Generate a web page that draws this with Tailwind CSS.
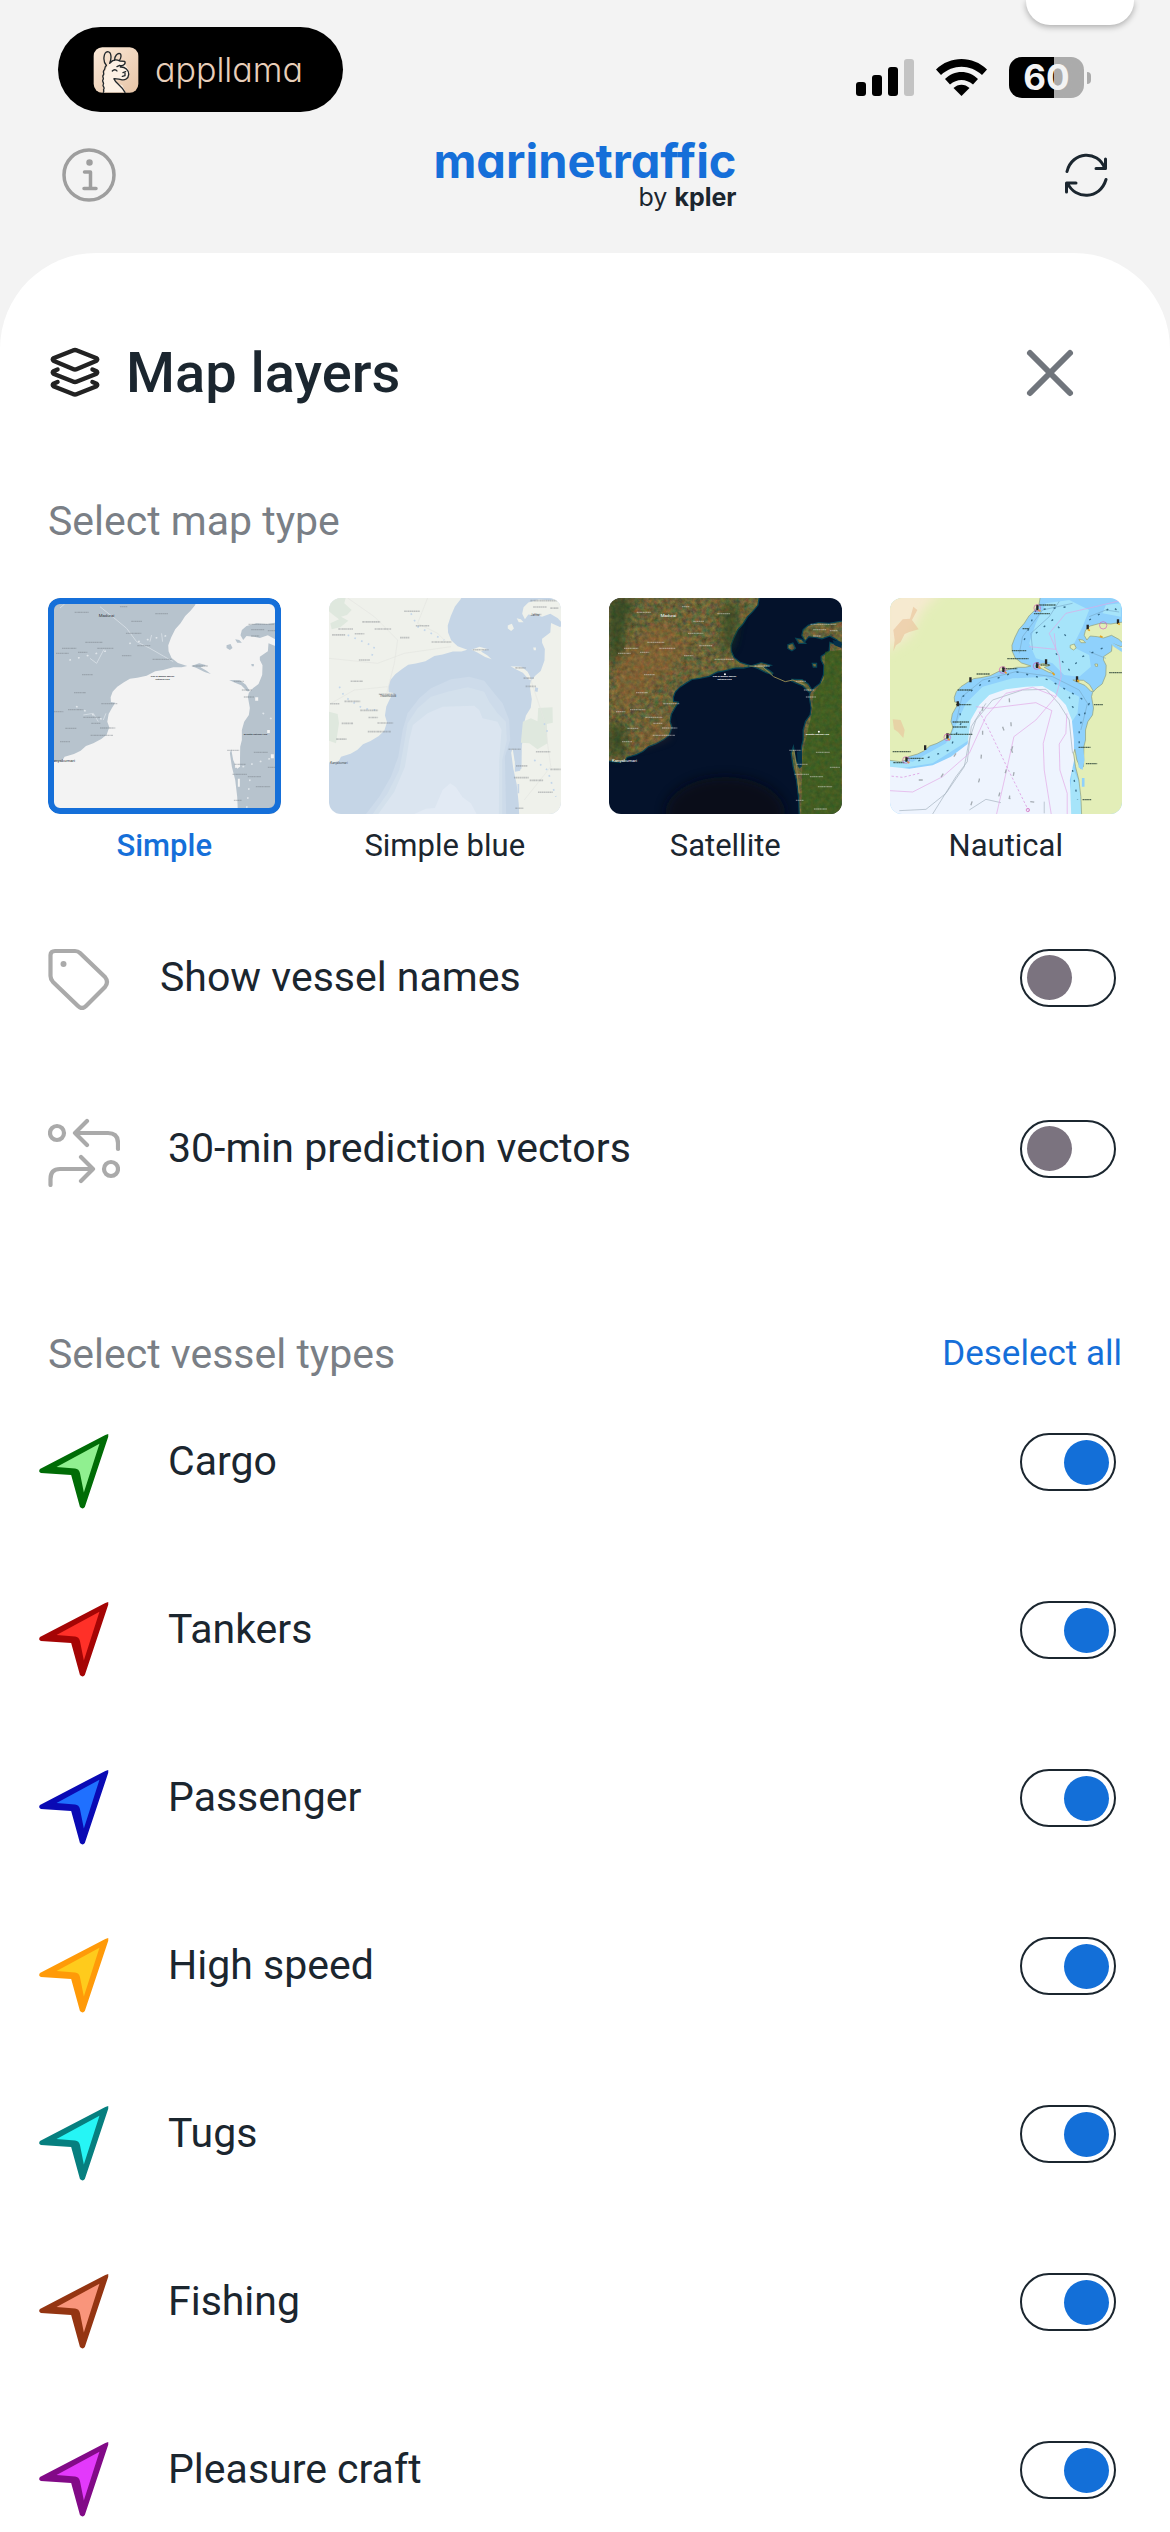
<!DOCTYPE html>
<html lang="en">
  <head>
    <meta charset="utf-8" />
    <meta name="viewport" content="width=device-width, initial-scale=1" />
    <title>Map layers</title>
    <script src="https://cdn.jsdelivr.net/npm/@tailwindcss/browser@4"></script>
  </head>
  <body class="relative flex h-screen flex-col overflow-hidden bg-[#f3f3f3] font-[Roboto,'Noto_Sans',sans-serif] text-[#1b262f]">

    <!-- shared shapes -->
    <svg class="absolute size-0" aria-hidden="true">
      <defs>
        <symbol id="vessel" viewBox="-3 -4 86 82">
          <path fill="currentColor" d="M71 0 68 1 1 36Q-1 39 2 40L33 42 42 75Q45 78 47 75L71 3Z" />
          <path d="M62 10 18 34 37 35.500Q41 36 42 40L46 60Z" />
        </symbol>
        <g id="coast">
          <path d="M40 40H502L496 75 482 92 466 108 452 130 436 148 424 172 415 196 416 214 425 234 444 249 472 258 455 262 430 262 400 270 376 274 350 287 322 293 300 296 282 307 262 320 248 335 242 352 243 366 256 368 246 384 236 402 232 425 238 442 230 464 214 477 190 490 168 498 152 512 132 522 104 530 98 540 80 545 40 540Z" />
          <path d="M770 186 742 200 716 190 714 214 690 230 690 240 698 256 697 285 686 312 670 324 657 338 654 350 660 384 657 405 643 425 636 450 636 480 631 500 630 560 622 566 610 540 604 508 600 520 606 560 616 600 622 650 625 720H770Z" />
          <path d="M636 150 650 138 680 130 712 132 760 124V200L736 178 714 166 690 174 672 170 650 168 640 180 632 166ZM590 196 602 192 608 204 600 210 590 204ZM616 178 628 180 636 188 622 188ZM664 252 672 252 672 259 666 259Z" />
          <path d="M484 258 508 250 530 256 512 262 530 272 543 282 524 276 500 264ZM598 300 630 301 648 314 660 334 652 334 634 316 612 307Z" />
        </g>
        <path id="place-names" fill="none" stroke-width="4" stroke-dasharray="5 1 3 1 6 1" d="M134 97h42M270 80h22M376 101h38M304 124h32M288 160h46M166 187h52M96 205h44M202 205h48M78 220h38M144 217h28M276 227h28M322 197h40M368 238h58M488 258h46M156 284h32M132 338h36M214 371h48M114 389h46M72 395h28M160 412h52M184 430h28M106 445h34M210 444h46M182 466h68M90 485h30M656 133h78M664 149h40M714 152h24M664 168h24M612 304h30M636 330h30M642 351h30M592 511h36M672 517h42M614 553h34M608 583h44M654 590h40M678 620h44M612 661h24M714 562h30M666 687h40" />
        <g id="place-labels" font-family="Roboto, sans-serif">
          <text x="206" y="110" font-size="13">Madurai</text>
          <text x="398" y="292" font-size="7" font-weight="700" text-anchor="middle">Gulf of Mannar Marine</text>
          <text x="398" y="301" font-size="7" font-weight="700" text-anchor="middle">National Park</text>
          <text x="642" y="465" font-size="7" font-weight="700">Wilpattu National Park</text>
          <text x="60" y="547" font-size="13">Kanyakumari</text>
        </g>
        <filter id="terrain" x="0" y="0" width="100%" height="100%" color-interpolation-filters="sRGB">
          <feTurbulence type="fractalNoise" baseFrequency="0.07" numOctaves="5" seed="8" />
          <feColorMatrix values=".6 0 0 0 .13  .15 .35 0 0 .15  0 .1 .2 0 .08  0 0 0 0 .75" result="noise" />
          <feComposite in="noise" in2="SourceGraphic" operator="in" result="n" />
          <feMerge><feMergeNode in="SourceGraphic" /><feMergeNode in="n" /></feMerge>
        </filter>
        <filter id="soft" x="-50%" y="-50%" width="200%" height="200%"><feGaussianBlur stdDeviation="16" /></filter>
        <linearGradient id="llama-bg" x1="0" y1="0" x2="1" y2="1">
          <stop stop-color="#fbe9d8" /><stop offset="1" stop-color="#e6c4a6" />
        </linearGradient>
      </defs>
    </svg>

    <div class="absolute top-0 right-9 h-[25px] w-27 rounded-b-3xl bg-white shadow-[0_2px_6px_rgba(0,0,0,0.3)]"></div>

    <header>
      <!-- status bar -->
      <div class="flex items-center justify-between pt-[27px] pr-[79px] pl-[58px]">
        <div class="flex h-[85px] items-center gap-4 rounded-full bg-black pr-10 pl-[35px]">
          <svg class="size-[46px]" viewBox="278 137 138 138" aria-hidden="true">
            <rect x="280" y="138" width="134" height="136" rx="26" fill="url(#llama-bg)" />
            <path fill="#fdf1e4" d="M310 273 308 240 312 215 322 195 332 182 354 176 372 184 384 206 384 226 370 236 344 234 350 246 366 252 376 273Z" />
            <path fill="none" stroke="#22282b" stroke-width="4" stroke-linecap="round" stroke-linejoin="round" d="M318 192C306 180 310 152 322 151 334 152 334 172 328 186M343 177C342 164 352 154 359 157 364 160 362 170 358 176M329 185C338 174 350 174 358 179L373 180C377 186 370 195 358 192L350 196M336 209C340 204 347 204 350 209M360 197C374 196 386 206 385 220 384 232 374 238 362 235 352 233 346 231 341 232M368 214 376 211M374 216V223L366 225M341 233C346 246 362 250 374 273M318 193C311 197 316 203 311 207 306 212 313 217 309 221 304 227 312 230 308 235 304 240 312 244 309 249 305 254 313 257 311 262 307 266 313 269 309 273" />
          </svg>
          <span class="font-[Inter,sans-serif] text-[34px]/[40px] font-light text-[#e8cfba] [font-feature-settings:'cv11']">appllama</span>
        </div>
        <div class="flex items-center gap-[22px] pt-4">
          <svg class="h-[37px] w-[58px]" viewBox="0 0 58 37" aria-label="Signal">
            <rect y="23" width="10" height="14" rx="3" /><rect x="16" y="16" width="10" height="21" rx="3" /><rect x="32" y="8" width="10" height="29" rx="3" /><rect x="48" width="10" height="37" rx="3" fill="#c3c3c3" />
          </svg>
          <svg class="h-[37px] w-[51px]" viewBox="0 0 51 37" aria-label="Wi-Fi">
            <path d="M0 10.500C14-3.500 37-3.500 51 10.500L46 16C34 5 17 5 5 16ZM9 20C18 10.500 33 10.500 42 20L37 25.500C30 19.500 21 19.500 14 25.500ZM17.500 29C22 24.500 29 24.500 33.500 29L25.500 37Z" />
          </svg>
          <div class="flex items-center gap-[3px]">
            <div class="flex h-[41px] w-[75px] items-center justify-center rounded-[13px] bg-linear-to-r from-black from-60% to-[#ababab] to-60% font-[Inter,sans-serif] text-[35px] font-bold text-[#f3f3f3]">60</div>
            <div class="h-3 w-1 rounded-r-full bg-[#ababab]"></div>
          </div>
        </div>
      </div>

      <!-- app bar -->
      <div class="grid h-[126px] grid-cols-3 items-center px-[62px]">
        <button type="button" aria-label="Information" class="justify-self-start">
          <svg class="size-[54px]" viewBox="0 0 54 54" fill="none" stroke="#9e9e9e" stroke-width="3.500" stroke-linecap="round" stroke-linejoin="round">
            <circle cx="27" cy="27" r="25" /><path d="M22.500 24H28.500V40M22 40.500H34" /><circle cx="27.500" cy="14.500" r="1.500" fill="#9e9e9e" />
          </svg>
        </button>
        <div class="flex flex-col items-end justify-self-center font-[Inter,sans-serif] [font-feature-settings:'cv11']">
          <span class="text-[47px]/[44px] font-bold text-[#156fd9]">marinetraffic</span>
          <span class="text-[25px]/[28px]">by <b>kpler</b></span>
        </div>
        <button type="button" aria-label="Refresh" class="justify-self-end">
          <svg class="size-[44px]" viewBox="0 0 44 44" fill="none" stroke="#1b262f" stroke-width="3" stroke-linecap="round" stroke-linejoin="round">
            <path d="M3 18.500C8-2 34-3 40.500 15M41.500 6V15.500H32M42 26.500C36 47 11 47 3.500 30M2.500 39V30H12" />
          </svg>
        </button>
      </div>
    </header>

    <main class="mt-[15px] flex-1 rounded-t-[96px] bg-white px-12 pt-19">
      <div class="flex h-22 items-center gap-6">
        <svg class="size-[54px]" viewBox="-2 -1 54 54" fill="none" stroke="#222" stroke-width="4.500" stroke-linecap="round" stroke-linejoin="round" aria-hidden="true">
          <path d="M23 3.500Q25 2.500 27 3.500L46 11Q48.500 12.500 46 14L27 22Q25 23 23 22L4 14Q1.500 12.500 4 11ZM7.500 22.500 4 24Q1.500 25.500 4 27L23 34.500Q25 35.500 27 34.500L46 27Q48.500 25.500 46 24L42.500 22.500M7.500 35 4 36.500Q1.500 38 4 39.500L23 47Q25 48 27 47L46 39.500Q48.500 38 46 36.500L42.500 35" />
        </svg>
        <h1 class="flex-1 text-[56px] font-medium">Map layers</h1>
        <button type="button" aria-label="Close" class="mr-[46px]">
          <svg class="size-[52px]" viewBox="0 0 52 52" fill="none" stroke="#70757c" stroke-width="6" stroke-linecap="round"><path d="M6 6 46 46M46 6 6 46" /></svg>
        </button>
      </div>

      <h2 class="mt-20 text-[41px]/[48px] text-[#7a7f86]">Select map type</h2>
      <div class="mt-[53px] grid grid-cols-4 gap-12 text-center text-[31px]/[40px]">
        <button type="button" aria-pressed="true" class="flex flex-col gap-3">
          <span class="relative block h-[216px] w-full overflow-hidden rounded-xl after:absolute after:inset-0 after:rounded-xl after:border-6 after:border-[#156fd9]">
            <svg class="size-full" viewBox="54 54 698 648" preserveAspectRatio="none" aria-hidden="true">
              <path fill="#f3f3f3" d="M0 0H800V760H0Z" />
              <use href="#coast" fill="#b7c3cd" />
              <path fill="none" stroke="#d3dbe2" stroke-width="3" d="M210 80 250 112 290 145 320 185 360 205 400 228 430 245M180 235 200 250 222 208M160 405 190 400 205 425M395 160 398 185M365 165 360 185M90 84 104 72M228 400 220 420" />
              <path fill="none" stroke="#dfe5ea" stroke-width="5" stroke-linecap="round" stroke-dasharray="1 26" d="M120 240 240 210M140 380 230 425M300 190 420 165M640 560 740 530M660 600 650 690M700 400 730 420" />
              <path fill="#f3f3f3" d="M676 352h9v10h-9ZM612 515 630 510 630 560 616 564ZM723 523h9v12h-9ZM624 596h6v24h-6ZM712 450h8v9h-8Z" />
              <use href="#place-names" stroke="#70777f" opacity=".4" />
              <use href="#place-labels" fill="#30363d" />
            </svg>
          </span>
          <span class="w-full font-medium text-[#156fd9]">Simple</span>
        </button>
        <button type="button" aria-pressed="false" class="flex flex-col gap-3">
          <span class="block h-[216px] w-full overflow-hidden rounded-xl">
            <svg class="size-full" viewBox="54 54 698 648" preserveAspectRatio="none" aria-hidden="true">
              <path fill="#c5d5e6" d="M0 0H800V760H0Z" />
              <path fill="#cddbea" d="M165 702 205 650 240 590 262 530 275 450 290 400 325 355 360 325 420 298 475 290 520 302 550 340 575 370 595 420 598 480 582 530 586 702Z" />
              <path fill="#d3e0ec" d="M185 702 230 640 265 570 278 500 290 430 320 385 360 350 410 335 470 322 520 335 535 365 560 400 585 425 588 480 574 540 574 702Z" />
              <path fill="#dbe5f0" d="M202 702 250 635 282 560 295 480 306 435 350 400 395 380 490 377 505 390 515 415 560 425 572 450 565 540 564 702Z" />
              <path fill="#e2eaf4" d="M310 702 345 686 372 684 395 630 418 610 435 622 455 652 480 670 497 702Z" />
              <g transform="matrix(1.03 0 0 1.18 -17 -95)">
                <use href="#coast" fill="#eff1eb" />
              </g>
              <path fill="#dfe8de" d="M54 395 80 402 84 430 75 490 54 482ZM636 425 660 415 680 424 682 384 725 382 726 428 708 432 710 490 680 508 655 490 630 488ZM54 54H104L100 70 122 90 108 105 90 110 112 122 88 142 62 148 58 130 84 118 66 104 54 94Z" />
              <path fill="none" stroke="#e4e6e1" stroke-width="2" d="M54 235 200 250 280 220 420 200M110 54 190 110 260 180 250 250 225 350M350 54 320 130 380 160 410 190M60 370 130 330 230 320M660 300 700 420 720 560 640 660" />
              <path fill="none" stroke="#c3d6ea" stroke-width="5" stroke-dasharray="5 17" d="M85 320 100 350 155 385 195 390M110 165 190 200 180 240M300 100 320 140 400 180M670 540 710 570 735 650M700 430 715 470" />
              <path fill="#c5d5e6" d="M673 322 682 324 680 336 672 334ZM612 510 626 506 628 572 612 575ZM620 612h5v28h-5Z" />
              <g transform="matrix(1.03 0 0 1.18 -17 -95)"><use href="#place-names" stroke="#757a80" opacity=".4" /></g>
              <g font-family="Roboto, sans-serif" font-size="9" fill="#454b52"><text x="58" y="553">Kanyakumari</text><text x="206" y="350">Thoothukudi</text><text x="660" y="108">Jaffna</text></g>
            </svg>
          </span>
          <span class="w-full">Simple blue</span>
        </button>
        <button type="button" aria-pressed="false" class="flex flex-col gap-3">
          <span class="block h-[216px] w-full overflow-hidden rounded-xl">
            <svg class="size-full" viewBox="51 54 698 648" preserveAspectRatio="none" aria-hidden="true">
              <path fill="#04122b" d="M0 0H800V760H0Z" />
              <ellipse cx="400" cy="700" rx="180" ry="110" fill="#070d18" opacity=".8" filter="url(#soft)" />
              <use href="#coast" fill="none" stroke="#0c6670" stroke-width="8" opacity=".6" />
              <g filter="url(#terrain)">
                <use href="#coast" fill="#5d5a30" />
              </g>
              <path fill="#2c5a17" opacity=".65" d="M700 215 749 210V702H628L632 520 660 400 665 340 695 300Z" />
              <path fill="#27431c" opacity=".75" filter="url(#soft)" d="M51 54H130L100 130 90 230 51 250ZM51 425 100 440 95 525 51 530ZM400 60 440 90 420 200 390 220Z" />
              <path fill="#a4622e" opacity=".35" filter="url(#soft)" d="M80 230 200 120 300 190 250 260 150 350 70 400ZM160 440 220 410 230 470 130 500Z" />
              <path fill="#05304a" d="M615 515 629 512 631 555 618 560ZM722 180 749 186V204L728 196Z" />
              <path fill="none" stroke="#8f8550" stroke-width="3" d="M472 258 512 260 545 290 580 305 603 300 640 316M606 510 614 560 622 640" />
              <use href="#place-names" stroke="#dedede" opacity=".45" />
              <use href="#place-labels" fill="#fff" />
              <circle cx="399" cy="283" r="3" fill="#fff" /><circle cx="681" cy="455" r="3" fill="#fff" />
            </svg>
          </span>
          <span class="w-full">Satellite</span>
        </button>
        <button type="button" aria-pressed="false" class="flex flex-col gap-3">
          <span class="block h-[216px] w-full overflow-hidden rounded-xl">
            <svg class="size-full" viewBox="52 54 698 648" preserveAspectRatio="none" aria-hidden="true">
              <path fill="#8fd1fc" d="M0 0H800V760H0Z" />
              <path fill="#a6e4fa" d="M520 70 590 60 650 90 630 140 600 200 650 225 655 260 620 290 575 285 540 250 490 235 470 190 490 130ZM700 75 745 70V110L690 100ZM280 370 330 320 420 295 520 290 570 325 620 350 615 400 595 430 560 370 500 330 400 335 330 380 300 430 290 480 180 550 52 570 52 535 120 545 220 490 240 455ZM600 560 625 620 628 702H585Z" />
              <path fill="#eef4fe" d="M52 560 110 566 180 556 235 530 285 492 294 420 320 375 350 345 400 328 460 320 510 318 545 338 580 375 598 420 604 480 605 540 592 600 596 702H52Z" />
              <g transform="translate(3 0)"><use href="#coast" fill="#e3eeb8" stroke="#8f9d78" stroke-width="2" /></g>
              <path fill="#f6ead0" filter="url(#soft)" d="M30 30H210L150 90 110 170 30 220Z" />
              <path fill="#eac29a" opacity=".6" d="M62 150 90 118 112 116 122 80 134 90 118 120 138 148 110 156 96 162 84 186 70 196 62 214 66 180ZM60 418 84 420 96 450 92 474 76 456 64 448Z" />
              <path fill="#8fd1fc" d="M616 510 632 505 636 540 630 570 618 562ZM628 594h8v26h-8ZM700 176 748 205V216L724 200Z" />
              <path fill="none" stroke="#a3b1bc" stroke-width="2" d="M80 692 160 688 220 640 275 560 290 480 310 420 360 360 450 330 520 328 560 372 590 420 600 520M180 702 250 590 284 545 296 440 340 370M290 690 340 658 385 668M515 665V700" />
              <path fill="none" stroke="#7aaccc" stroke-width="2" d="M440 220 450 170 510 90 600 70M480 210 475 160 530 110 560 64M250 430 268 350 330 300 430 275 540 290 620 330 645 370 625 450M650 110 700 90 740 96M650 215 700 235" />
              <path fill="none" stroke="#e2a6e5" stroke-width="2" d="M52 632 120 636 210 590 290 520 340 410 400 340 480 322 550 350 566 290 560 230 530 160 580 100 660 82 750 60M310 380 350 385 490 368 538 392 512 490 515 570 536 702M372 702 400 580 424 470 490 420 550 350M583 400 580 460 560 492 562 570 584 640V702M470 200 550 208 545 160" />
              <path fill="none" stroke="#d98adc" stroke-width="2" stroke-dasharray="7 6" d="M320 395 345 440 405 565 468 692M140 580 90 592 52 588" />
              <path fill="none" stroke="#1d4f6c" stroke-width="4" opacity=".8" stroke-dasharray="6 24" d="M455 180 490 90 590 80M490 160 540 120 590 180M550 220 590 270 630 230 700 200M270 350 330 310 430 275 530 300 600 340 650 370 620 440 620 490M260 370 265 430 230 510 130 545M590 350 600 380 625 410M650 120 720 80 745 100M600 570 615 660" />
              <path fill="none" stroke="#a5acb3" stroke-width="4" stroke-dasharray="12 60" d="M330 380 330 480 320 600 290 690M410 355 420 500 370 680M250 520 200 600 90 600M390 440 430 545 410 655 495 668" />
              <path fill="none" stroke="#2c4338" stroke-width="4" opacity=".8" stroke-dasharray="5 1 4 1" d="M500 75h50M484 101h48M450 146h20M418 212h44M404 236h64M312 282h40M388 266h46M255 330h42M250 374h46M240 426h50M240 441h42M222 463h78M60 515h54M62 548h34M104 535h50M710 278h42M664 374h28M618 502h36M640 551h34M630 659h26M504 255h28" />
              <path fill="#262626" d="M491 74h7v17h-7ZM389 260h7v16h-7ZM290 292h7v15h-7ZM252 364h7v15h-7ZM221 460h7v16h-7ZM154 496h7v14h-7ZM98 531h7v14h-7ZM490 247h8v17h-8ZM517 238h7v14h-7ZM610 289h7v16h-7ZM642 134h7v14h-7ZM733 118h7v14h-7Z" />
              <path fill="none" stroke="#e5a320" stroke-width="5" d="M496 90 504 94M396 275 402 280M225 476 232 480M104 545 110 549M498 260 504 266M540 278 546 286M614 300 620 305M646 148 652 152M682 168 690 172M736 130 742 134" />
              <g fill="none" stroke="#d060b8" stroke-width="2"><circle cx="494" cy="84" r="10" /><circle cx="390" cy="270" r="10" /><circle cx="224" cy="472" r="10" /><circle cx="100" cy="540" r="10" /><circle cx="492" cy="258" r="10" /><circle cx="692" cy="136" r="11" /><circle cx="466" cy="690" r="5" /></g>
            </svg>
          </span>
          <span class="w-full">Nautical</span>
        </button>
      </div>

      <div class="mt-[26px] text-[41px]">
        <label class="flex h-[171px] items-center gap-12 pr-[6px]">
          <svg class="size-16" viewBox="0 0 64 64" fill="none" stroke="#aaa" stroke-width="4.200" stroke-linejoin="round" aria-hidden="true">
            <path d="M7 5H27Q30 5 32 7L57 31Q61 36 57 41L38 60Q34 64 30 60L5 36Q2.500 33 2.500 30V9Q2.500 5 7 5Z" /><circle cx="15.500" cy="18" r="3" fill="#aaa" stroke="none" />
          </svg>
          <span class="flex-1">Show vessel names</span>
          <input type="checkbox" role="switch" class="flex h-[58px] w-24 appearance-none items-center rounded-full border-2 border-[#1b262f] px-[5px] before:size-[45px] before:rounded-full before:bg-[#7b737f] checked:justify-end checked:before:bg-[#136fd8]" />
        </label>
        <label class="flex h-[171px] items-center gap-12 pr-[6px]">
          <svg class="h-[76px] w-[72px]" viewBox="0 0 72 76" fill="none" stroke="#aaa" stroke-width="4.200" stroke-linecap="round" stroke-linejoin="round" aria-hidden="true">
            <circle cx="9" cy="22" r="7" /><path d="M39 10 27 22 39 34M27 22H60Q70 22 70 32V38M2.500 74V68Q2.500 58 12 58H45M33 46 45 58 33 70" /><circle cx="63" cy="58" r="7" />
          </svg>
          <span class="flex-1">30-min prediction vectors</span>
          <input type="checkbox" role="switch" class="flex h-[58px] w-24 appearance-none items-center rounded-full border-2 border-[#1b262f] px-[5px] before:size-[45px] before:rounded-full before:bg-[#7b737f] checked:justify-end checked:before:bg-[#136fd8]" />
        </label>
      </div>

      <div class="mt-24 flex items-center justify-between">
        <h2 class="text-[41px]/[48px] text-[#7a7f86]">Select vessel types</h2>
        <button type="button" class="text-[35px]/[48px] text-[#156fd9]">Deselect all</button>
      </div>
      <div class="text-[41px]">
        <label class="flex h-[168px] items-center gap-12 pr-[6px]">
          <svg class="-ml-3 h-20 w-[84px] translate-y-2 text-[#006c06]" fill="#90f090" aria-hidden="true"><use href="#vessel" /></svg>
          <span class="flex-1">Cargo</span>
          <input type="checkbox" role="switch" checked class="flex h-[58px] w-24 appearance-none items-center rounded-full border-2 border-[#1b262f] px-[5px] before:size-[45px] before:rounded-full before:bg-[#7b737f] checked:justify-end checked:before:bg-[#136fd8]" />
        </label>
        <label class="flex h-[168px] items-center gap-12 pr-[6px]">
          <svg class="-ml-3 h-20 w-[84px] translate-y-2 text-[#a50505]" fill="#ff3028" aria-hidden="true"><use href="#vessel" /></svg>
          <span class="flex-1">Tankers</span>
          <input type="checkbox" role="switch" checked class="flex h-[58px] w-24 appearance-none items-center rounded-full border-2 border-[#1b262f] px-[5px] before:size-[45px] before:rounded-full before:bg-[#7b737f] checked:justify-end checked:before:bg-[#136fd8]" />
        </label>
        <label class="flex h-[168px] items-center gap-12 pr-[6px]">
          <svg class="-ml-3 h-20 w-[84px] translate-y-2 text-[#0a0ab4]" fill="#1f70ff" aria-hidden="true"><use href="#vessel" /></svg>
          <span class="flex-1">Passenger</span>
          <input type="checkbox" role="switch" checked class="flex h-[58px] w-24 appearance-none items-center rounded-full border-2 border-[#1b262f] px-[5px] before:size-[45px] before:rounded-full before:bg-[#7b737f] checked:justify-end checked:before:bg-[#136fd8]" />
        </label>
        <label class="flex h-[168px] items-center gap-12 pr-[6px]">
          <svg class="-ml-3 h-20 w-[84px] translate-y-2 text-[#ff9a08]" fill="#ffcb1c" aria-hidden="true"><use href="#vessel" /></svg>
          <span class="flex-1">High speed</span>
          <input type="checkbox" role="switch" checked class="flex h-[58px] w-24 appearance-none items-center rounded-full border-2 border-[#1b262f] px-[5px] before:size-[45px] before:rounded-full before:bg-[#7b737f] checked:justify-end checked:before:bg-[#136fd8]" />
        </label>
        <label class="flex h-[168px] items-center gap-12 pr-[6px]">
          <svg class="-ml-3 h-20 w-[84px] translate-y-2 text-[#067f7f]" fill="#26f5f5" aria-hidden="true"><use href="#vessel" /></svg>
          <span class="flex-1">Tugs</span>
          <input type="checkbox" role="switch" checked class="flex h-[58px] w-24 appearance-none items-center rounded-full border-2 border-[#1b262f] px-[5px] before:size-[45px] before:rounded-full before:bg-[#7b737f] checked:justify-end checked:before:bg-[#136fd8]" />
        </label>
        <label class="flex h-[168px] items-center gap-12 pr-[6px]">
          <svg class="-ml-3 h-20 w-[84px] translate-y-2 text-[#943512]" fill="#f9957b" aria-hidden="true"><use href="#vessel" /></svg>
          <span class="flex-1">Fishing</span>
          <input type="checkbox" role="switch" checked class="flex h-[58px] w-24 appearance-none items-center rounded-full border-2 border-[#1b262f] px-[5px] before:size-[45px] before:rounded-full before:bg-[#7b737f] checked:justify-end checked:before:bg-[#136fd8]" />
        </label>
        <label class="flex h-[168px] items-center gap-12 pr-[6px]">
          <svg class="-ml-3 h-20 w-[84px] translate-y-2 text-[#820a87]" fill="#e339fb" aria-hidden="true"><use href="#vessel" /></svg>
          <span class="flex-1">Pleasure craft</span>
          <input type="checkbox" role="switch" checked class="flex h-[58px] w-24 appearance-none items-center rounded-full border-2 border-[#1b262f] px-[5px] before:size-[45px] before:rounded-full before:bg-[#7b737f] checked:justify-end checked:before:bg-[#136fd8]" />
        </label>
      </div>
    </main>
  </body>
</html>
